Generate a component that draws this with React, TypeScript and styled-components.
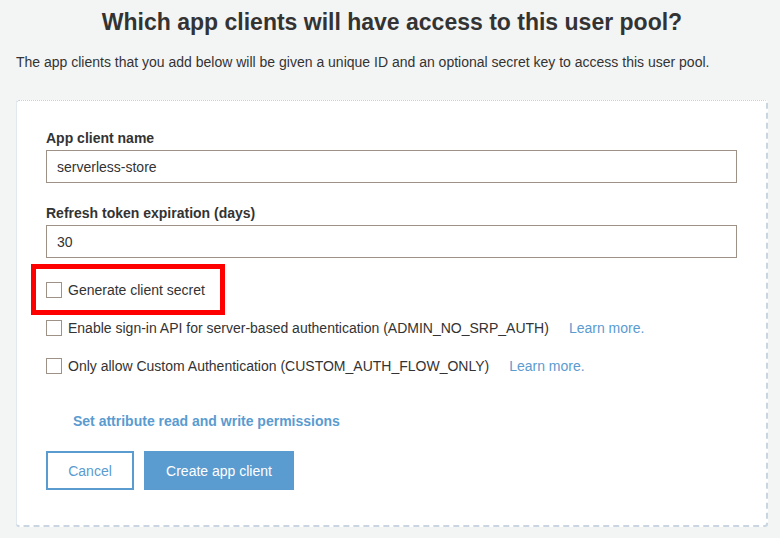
import React from "react";
import styled, { createGlobalStyle } from "styled-components";

const Global = createGlobalStyle`
  html, body { margin: 0; padding: 0; background: #f3f5f5; }
  body { font-family: "Liberation Sans", Arial, sans-serif; color: #333; }
  * { box-sizing: border-box; }
`;

const Page = styled.div`
  width: 780px;
  height: 538px;
  overflow: hidden;
  padding: 7px 12px 0 16px;
  display: flex;
  flex-direction: column;
`;

const Title = styled.h1`
  margin: 0;
  font-size: 23px;
  line-height: 30px;
  font-weight: 700;
  text-align: center;
  color: #333;
`;

const Subtitle = styled.p`
  margin: 16px 0 0;
  font-size: 14px;
  line-height: 18px;
  color: #333;
`;

const Card = styled.div`
  margin-top: 29px;
  width: 752px;
  background: #fff;
  border: 1px dotted #c3d1de;
  border-right: 2px dashed #c9d6e2;
  border-bottom: 2px dashed #c9d6e2;
  border-radius: 3px;
  padding: 29px 29px 35px 29px;
  display: flex;
  flex-direction: column;
`;

const Label = styled.label`
  font-size: 14px;
  line-height: 17px;
  font-weight: 700;
  color: #333;
`;

const Input = styled.div<{ $gapAfter?: number }>`
  margin-top: 3px;
  height: 33px;
  border: 1px solid #9e9286;
  padding: 0 10px;
  display: flex;
  align-items: center;
  font-size: 14px;
  color: #333;
  margin-bottom: ${(p) => p.$gapAfter ?? 0}px;
`;

const Options = styled.div`
  margin-top: 24px;
  display: flex;
  flex-direction: column;
  gap: 22px;
`;

const Row = styled.div`
  position: relative;
  display: flex;
  align-items: center;
  height: 16px;
  font-size: 14px;
  color: #333;
`;

const Box = styled.span`
  width: 16px;
  height: 16px;
  border: 1px solid #9e9286;
  background: #fff;
  flex: none;
  margin-right: 6px;
`;

const Learn = styled.a<{ $offset: number }>`
  margin-left: ${(p) => p.$offset}px;
  color: #5a9bd0;
  font-size: 14px;
  text-decoration: none;
`;

const Highlight = styled.span`
  position: absolute;
  left: -15px;
  top: -18px;
  width: 194px;
  height: 51px;
  border: 5px solid #ff0000;
  pointer-events: none;
`;

const PermLink = styled.a`
  margin: 38px 0 0 27px;
  font-size: 14px;
  line-height: 18px;
  font-weight: 700;
  color: #5a9bd0;
  text-decoration: none;
`;

const Buttons = styled.div`
  margin-top: 21px;
  display: flex;
  gap: 10px;
`;

const Button = styled.button<{ $primary?: boolean; $w: number }>`
  width: ${(p) => p.$w}px;
  height: 39px;
  font-family: "Liberation Sans", Arial, sans-serif;
  font-size: 14px;
  border: 2px solid #5a9bd0;
  background: ${(p) => (p.$primary ? "#5a9bd0" : "#fff")};
  color: ${(p) => (p.$primary ? "#fff" : "#5a9bd0")};
  padding: 0;
  cursor: pointer;
`;

export default function App() {
  return (
    <>
      <Global />
      <Page>
        <Title>Which app clients will have access to this user pool?</Title>
        <Subtitle>
          The app clients that you add below will be given a unique ID and an optional secret key to access this user pool.
        </Subtitle>
        <Card>
          <Label>App client name</Label>
          <Input $gapAfter={22}>serverless-store</Input>
          <Label>Refresh token expiration (days)</Label>
          <Input>30</Input>
          <Options>
            <Row>
              <Highlight />
              <Box />
              Generate client secret
            </Row>
            <Row>
              <Box />
              Enable sign-in API for server-based authentication (ADMIN_NO_SRP_AUTH)
              <Learn $offset={20}>Learn more.</Learn>
            </Row>
            <Row>
              <Box />
              Only allow Custom Authentication (CUSTOM_AUTH_FLOW_ONLY)
              <Learn $offset={20}>Learn more.</Learn>
            </Row>
          </Options>
          <PermLink>Set attribute read and write permissions</PermLink>
          <Buttons>
            <Button $w={88}>Cancel</Button>
            <Button $primary $w={150}>Create app client</Button>
          </Buttons>
        </Card>
      </Page>
    </>
  );
}
